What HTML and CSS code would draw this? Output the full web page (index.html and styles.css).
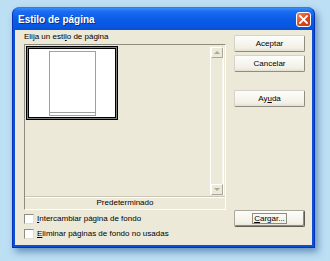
FILE: index.html
```html
<!DOCTYPE html>
<html lang="es">
<head>
    <meta charset="UTF-8">
    <title>Estilo de página</title>
    <link rel="stylesheet" href="styles.css">
</head>
<body>
    <div class="window">
        <div class="titlebar">
            <span class="title">Estilo de página</span>
            <span class="close">
                <svg width="9" height="9" viewBox="0 0 9 9"><path d="M1 1 L8 8 M8 1 L1 8" stroke="#fff" stroke-width="1.8" stroke-linecap="square"/></svg>
            </span>
        </div>
        <div class="client">
            <div class="left-col">
                <div class="caption">Elija un esti<u>l</u>o de página</div>
                <div class="listbox">
                    <div class="list-main">
                        <div class="items">
                            <div class="item selected">
                                <div class="page"><div class="page-foot"></div></div>
                            </div>
                        </div>
                        <div class="scrollbar">
                            <div class="sb-btn"><span class="arrow up"></span></div>
                            <div class="sb-track"></div>
                            <div class="sb-btn"><span class="arrow down"></span></div>
                        </div>
                    </div>
                    <div class="list-foot">Predeterminado</div>
                </div>
                <label class="check"><span class="box"></span><span><u>I</u>ntercambiar página de fondo</span></label>
                <label class="check"><span class="box"></span><span><u>E</u>liminar páginas de fondo no usadas</span></label>
            </div>
            <div class="right-col">
                <button class="btn">Aceptar</button>
                <button class="btn gap-small">Cancelar</button>
                <button class="btn gap-large">Ay<u>u</u>da</button>
                <button class="btn bottom"><span class="focus"><u>C</u>argar...</span></button>
            </div>
        </div>
    </div>
</body>
</html>
```

FILE: styles.css
```css
body { margin: 0; background: #bcdff4; font-family: "Liberation Sans", Arial, sans-serif; font-size: 8px; color: #000; height: 261px; overflow: hidden; }
.window { margin: 7px 0 0 12px; width: 303px; height: 241px; box-sizing: border-box; background: #0a4fd6; border-radius: 7px 7px 0 0; display: flex; flex-direction: column; box-shadow: 3px 4px 7px rgba(20, 70, 130, 0.5); border: 1px solid #0831b8; border-top-color: #2f7bf0; }
.titlebar { height: 22px; display: flex; align-items: center; justify-content: space-between; padding: 0 3px 0 5px; background: linear-gradient(#3c8cf7 0%, #1a6ef2 15%, #0a5be6 50%, #0757e0 85%, #0a4fcf 100%); border-radius: 6px 6px 0 0; }
.title { color: #fff; font-weight: bold; font-size: 10px; text-shadow: 1px 1px 0 #0a2f8a; }
.close { width: 13px; height: 13px; border: 1px solid #fff; border-radius: 3px; background: linear-gradient(135deg, #ef8a6c, #d9461f 55%, #c13a16); display: flex; align-items: center; justify-content: center; }
.close svg { display: block; }
.client { flex: 1; margin: 0 2px 2px; background: #ece9d8; display: flex; gap: 8px; padding: 0 7px 0 9px; }
.left-col { width: 202px; display: flex; flex-direction: column; }
.caption { height: 14px; line-height: 14px; }
.listbox { height: 166px; box-sizing: border-box; border: 1px solid; border-color: #8f8c80 #fff #fff #8f8c80; display: flex; flex-direction: column; }
.list-main { flex: 1; display: flex; padding: 1px; }
.items { flex: 1; }
.item { width: 92px; height: 74px; box-sizing: border-box; background: #fff; }
.item.selected { border: 1px solid #000; box-shadow: inset 0 0 0 1px #808080, inset 0 0 0 2px #000; display: flex; justify-content: center; padding-top: 4px; }
.page { width: 47px; height: 65px; box-sizing: border-box; border: 1px solid #a0a0a0; background: #fff; display: flex; flex-direction: column; justify-content: flex-end; }
.page-foot { height: 2px; border-top: 1px solid #a0a0a0; }
.scrollbar { width: 12px; margin-top: 1px; display: flex; flex-direction: column; border-left: 1px solid #fff; border-right: 1px solid #fff; }
.sb-btn { height: 11px; box-sizing: border-box; border: 1px solid; border-color: #fff #aca899 #aca899 #fff; background: #ece9d8; display: flex; align-items: center; justify-content: center; }
.sb-track { flex: 1; background: #ece9d8; border-right: 1px solid #f6f5ef; }
.arrow { width: 0; height: 0; border-left: 3px solid transparent; border-right: 3px solid transparent; }
.arrow.up { border-bottom: 3px solid #aca899; }
.arrow.down { border-top: 3px solid #aca899; }
.list-foot { height: 12px; line-height: 12px; text-align: center; border-top: 1px solid #c8c5b6; box-shadow: inset 0 1px 0 #fff; }
.check { display: flex; align-items: center; gap: 3px; height: 15px; }
.check:first-of-type { margin-top: 1px; }
.box { width: 10px; height: 10px; box-sizing: border-box; border: 1px solid; border-color: #8f8c80 #e0ded2 #e0ded2 #8f8c80; background: #fff; }
.right-col { width: 71px; display: flex; flex-direction: column; padding: 5px 0 18px; }
.btn { height: 17px; box-sizing: border-box; font: inherit; color: #000; padding: 0; background: linear-gradient(#fdfdfb, #f2f0e6 80%, #e3e0d2); border: 1px solid; border-color: #d6d3c6 #8f8c80 #8f8c80 #d6d3c6; border-radius: 2px; }
.gap-small { margin-top: 3px; }
.gap-large { margin-top: 18px; }
.bottom { margin-top: auto; border-color: #aca899 #5d5b52 #5d5b52 #aca899; box-shadow: inset -1px -1px 0 #8f8c80; }
.focus { outline: 1px solid #8f8c80; padding: 0 1px; }
```
